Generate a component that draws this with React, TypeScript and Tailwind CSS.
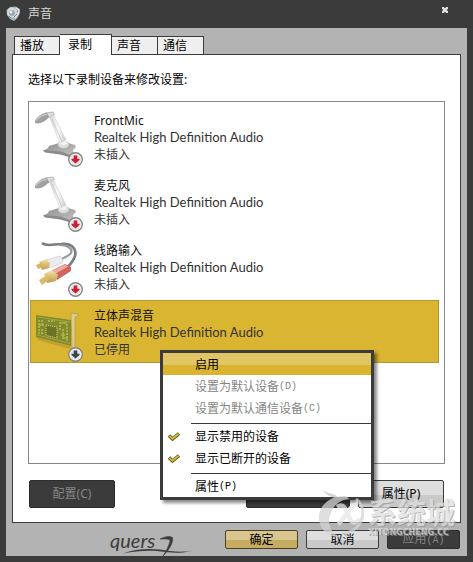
import { useState } from 'react';
import { clsx } from 'clsx';

type DeviceKind = 'mic' | 'line' | 'card';

const tabs = ['播放', '录制', '声音', '通信'];

const devices: { name: string; kind: DeviceKind; status: string }[] = [
  { name: 'FrontMic', kind: 'mic', status: '未插入' },
  { name: '麦克风', kind: 'mic', status: '未插入' },
  { name: '线路输入', kind: 'line', status: '未插入' },
  { name: '立体声混音', kind: 'card', status: '已停用' },
];

function SpeakerIcon() {
  return (
    <svg width="16" height="16" viewBox="0 0 16 16" className="shrink-0" aria-hidden="true">
      <path d="M4 1 L10 0.5 L13.5 3 L14 7 L11.5 12 L8 15 L4 13 L1 9 L0.5 4 Z" fill="#aab4ba" />
      <circle cx="6" cy="6.5" r="5" fill="#d3dade" />
      <circle cx="6" cy="7" r="3" fill="#9aa6ad" />
      <circle cx="5" cy="6" r="1.5" fill="#e6ebee" />
      <path d="M10 2 L13 4 L12 8 L9 12" fill="none" stroke="#e4e8ea" strokeWidth="1.5" />
      <path d="M8 11 L11 8 M11 5 L12 6 M3 10 L5 12" stroke="#77838b" strokeWidth="1" />
    </svg>
  );
}

function StatusBadge({ color }: { color: string }) {
  return (
    <g>
      <circle cx="40.5" cy="53.5" r="6.8" fill="#f5f5f5" stroke="#858585" strokeWidth="1.4" />
      <circle cx="40.5" cy="53.5" r="5.2" fill="#e3e6e8" />
      <path d="M38.7 49.5 h3.6 v3.2 h2.2 v1.2 L40.5 57.6 L36.5 53.9 v-1.2 h2.2 Z" fill={color} />
    </g>
  );
}

function DeviceIcon({ kind }: { kind: DeviceKind }) {
  return (
    <svg width="50" height="61" viewBox="0 0 50 61" className="shrink-0" aria-hidden="true">
      <defs>
        <linearGradient id="metal" x1="0" y1="0" x2="1" y2="0">
          <stop offset="0" stopColor="#d4d4d4" />
          <stop offset="0.5" stopColor="#fafafa" />
          <stop offset="1" stopColor="#c8c8c8" />
        </linearGradient>
        <linearGradient id="base" x1="0" y1="0" x2="1" y2="1">
          <stop offset="0" stopColor="#8e8e8e" />
          <stop offset="1" stopColor="#c4c4c4" />
        </linearGradient>
        <linearGradient id="gold" x1="0" y1="0" x2="0" y2="1">
          <stop offset="0" stopColor="#f6e3a4" />
          <stop offset="1" stopColor="#bd9a4e" />
        </linearGradient>
      </defs>
      {kind === 'mic' && (
        <g>
          <path d="M14 40 L24 37 L33 37 L40 39 L41 41 L38 44 L39 50 L34 50 L26 47 L12 46 L8 45 L13 42 Z" fill="url(#base)" />
          <path d="M8 44 L26 45.5 L38 50 L34 51 L25 48.5 L10 46.5 Z" fill="#8b8b8b" />
          <ellipse cx="28.5" cy="38.5" rx="5.5" ry="3.8" fill="#dedede" stroke="#bbb" strokeWidth="0.6" />
          <ellipse cx="28" cy="36.5" rx="4" ry="2.4" fill="#f2f2f2" />
          <path d="M15 12 L19 10 L31 34 L25 37 Z" fill="url(#metal)" stroke="#d0d0d0" strokeWidth="0.6" />
          <path d="M17 13 L27 36" stroke="#c4c4c4" strokeWidth="0.8" />
          <path d="M10 7 L18 6 L19.5 8.5 L13 12 Z" fill="#dcdcdc" stroke="#a5a5a5" strokeWidth="0.7" />
          <path d="M0 15 C2 10 8 6.5 12 7 L14 11 C10 16 4 18.5 0 17 Z" fill="#a0a0a0" />
          <path d="M1 14.5 C4 10.5 8 8.5 12 8.5" stroke="#c6c6c6" strokeWidth="1.4" fill="none" />
        </g>
      )}
      {kind === 'line' && (
        <g>
          <path d="M7 7 C12 11 19 8 26 8 C37 7 42 13 40 20 C38 26 35 29 31 33" fill="none" stroke="#7b7d80" strokeWidth="2.6" />
          <path d="M24 9 C33 9 38 13 36 17 C34 20 30 21 25 24" fill="none" stroke="#96989b" strokeWidth="2.2" />
          <path d="M11 24 L25 20 L28 24 L27 27 L14 32 Z" fill="#ececee" stroke="#c4c4c4" strokeWidth="0.6" />
          <path d="M4 26 L11 23 L15 27 L14 32 L7 34 Z" fill="url(#gold)" />
          <path d="M1 29 L7 27 L8 31 L3 33 Z" fill="#d5b362" />
          <path d="M16 35 L30 28 L36 31 L36 35 L22 44 Z" fill="#d0655f" />
          <path d="M17 35 L30 28.5 L33 30.5 L20 38 Z" fill="#f1aaa4" />
          <path d="M9 38 L17 34 L23 39 L21 45 L12 47 Z" fill="url(#gold)" />
          <path d="M4 44 L11 40 L14 44 L7 49 Z" fill="#dab968" />
        </g>
      )}
      {kind === 'card' && (
        <g>
          <path d="M2 36 L35 45 L35 48 L3 39 Z" fill="#c19f30" />
          <path d="M1 14 L36 19 L36 45 L1 36 Z" fill="#7f8c2c" />
          <path d="M2 16 L35 21 M2 34 L35 42.5" stroke="#b5a848" strokeWidth="0.8" />
          <path d="M11 24 L22 26 L22 37 L11 34.5 Z" fill="#6c7325" stroke="#e3d47c" strokeWidth="1" strokeDasharray="1 1" />
          <path d="M4 19 v14 M7 19 v4 M7 28 v6 M25 24 v6 M28 28 v10 M32 23 v17 M13 20 h7" stroke="#dccd6c" strokeWidth="1" strokeDasharray="2 1" />
          <path d="M26 34 h4 M4 24 h5 M24 22 h8 M27 37 h6" stroke="#b9b04e" strokeWidth="1.4" />
          <path d="M36 12 L43 13 L43 15 L40 16 L40 46 L37 48 Z" fill="#dccb96" stroke="#b0923a" strokeWidth="0.6" />
        </g>
      )}
      <StatusBadge color={kind === 'card' ? '#3b444c' : '#c8202f'} />
    </svg>
  );
}

function CheckMark() {
  return (
    <svg width="12" height="10" viewBox="0 0 12 10" aria-hidden="true">
      <path d="M1 3.5 L4.5 7 L11 1.5" fill="none" stroke="#5c5212" strokeWidth="3.4" />
      <path d="M1.4 3.8 L4.5 6.8 L10.6 1.8" fill="none" stroke="#d3bf3e" strokeWidth="1.8" />
    </svg>
  );
}

function HotKey({ letter }: { letter: string }) {
  return <span className="font-['Liberation_Mono',monospace] text-[10px]">({letter})</span>;
}

function MenuItem({
  label,
  hotKey,
  checked,
  disabled,
  active,
  onClick,
}: {
  label: string;
  hotKey?: string;
  checked?: boolean;
  disabled?: boolean;
  active?: boolean;
  onClick?: () => void;
}) {
  return (
    <button
      type="button"
      role={checked === undefined ? 'menuitem' : 'menuitemcheckbox'}
      aria-checked={checked}
      disabled={disabled}
      onClick={onClick}
      className={clsx(
        'flex h-[22px] w-full items-center pt-0.5 text-left whitespace-nowrap',
        disabled ? 'text-[#858585]' : 'text-black',
        active && 'bg-linear-to-b from-[#e2c563] from-55% to-[#dab32f] to-55%'
      )}
    >
      <span className="flex w-8 shrink-0 pl-[5px]">{checked && <CheckMark />}</span>
      {label}
      {hotKey && <HotKey letter={hotKey} />}
    </button>
  );
}

function Separator() {
  return <div role="separator" className="mt-1 mb-px ml-7 h-px bg-[#3b3b3b]" />;
}

function ContextMenu() {
  const [showDisabled, setShowDisabled] = useState(true);
  const [showDisconnected, setShowDisconnected] = useState(true);

  return (
    <div
      role="menu"
      className="absolute top-[350px] left-40 z-10 w-[214px] border-3 border-[#3b3b3b] bg-white shadow-[3px_3px_3px_rgba(0,0,0,0.45)]"
    >
      <MenuItem label="启用" active />
      <MenuItem label="设置为默认设备" hotKey="D" disabled />
      <MenuItem label="设置为默认通信设备" hotKey="C" disabled />
      <Separator />
      <MenuItem label="显示禁用的设备" checked={showDisabled} onClick={() => setShowDisabled(!showDisabled)} />
      <MenuItem label="显示已断开的设备" checked={showDisconnected} onClick={() => setShowDisconnected(!showDisconnected)} />
      <Separator />
      <MenuItem label="属性" hotKey="P" />
    </div>
  );
}

function Signature() {
  return (
    <div className="relative mr-auto ml-[98px] h-[19px] w-21 text-[#3d3d3d]">
      <span className="block font-['Lato',sans-serif] text-xl leading-5 italic">quers</span>
      <svg width="84" height="27" viewBox="0 0 84 27" className="absolute top-0 left-0" aria-hidden="true">
        <path d="M50 9 C55 6.5 60 5.5 62.5 7.5 C63.5 12 60 19 53 26 C57 20 60 13 60 10 C58 8.5 54 9 50 9" fill="currentColor" stroke="currentColor" strokeWidth="0.6" />
        <path d="M13 23.5 C28 17.5 46 18.5 60 21 C68 22 76 22 83 20.5 C74 23 66 23.2 58 22.3 C44 20 30 20 13 23.5" fill="currentColor" />
      </svg>
    </div>
  );
}

function Watermark() {
  return (
    <div className="pointer-events-none absolute right-[18px] bottom-[21px] z-20 flex items-start opacity-75" aria-hidden="true">
      <svg width="50" height="54" viewBox="0 0 50 54">
        <path d="M5 3 C11 8 17 5 20 11 C14 11 9 9 5 3 Z" fill="#c9c9c9" />
        <path d="M28 9 C12 8 0 19 1 32 C2 44 12 51 22 50 C13 46 9 37 12 28 C15 18 22 13 31 12 Z" fill="#d4d4d4" />
        <path d="M19 20 C27 15 28 24 32 32 C34 37 38 36 42 32 M40 17 C31 18 27 32 20 37" fill="none" stroke="#e6e6e6" strokeWidth="4.5" />
        <path d="M38 12 C50 22 46 42 26 47" fill="none" stroke="#d4d4d4" strokeWidth="3" />
      </svg>
      <div className="pt-3 text-[#dedede] [text-shadow:1px_1px_0_#999]">
        <div className="text-[29px] leading-7 font-bold">系统城</div>
        <div className="mt-0.5 font-['DejaVu_Sans',sans-serif] text-[8px] leading-2 font-bold">XITONGCHENG.CC</div>
      </div>
    </div>
  );
}

const darkButton = 'rounded-xs border border-[#2c2c2c] bg-[#3b3b3b] text-[#858585]';
const lightButton =
  'rounded-xs border border-[#3b3b3b] bg-linear-to-b from-[#dedede] from-55% to-[#c9c9c9] to-55% text-black';

export default function App() {
  const [tab, setTab] = useState('录制');
  const [selected, setSelected] = useState('立体声混音');

  return (
    <div className="relative overflow-hidden bg-[#3b3b3b] px-1.5 pb-1.5 font-['Noto_Sans','Noto_Sans_CJK_SC',sans-serif] text-xs">
      <header className="flex h-7 items-center gap-1.5 pr-4">
        <SpeakerIcon />
        <h1 className="text-[#d8d8d8]">声音</h1>
        <button type="button" aria-label="关闭" className="mb-2 ml-auto flex size-3 items-center justify-center">
          <svg width="6" height="6" viewBox="0 0 6 6" aria-hidden="true">
            <path d="M0 0 L6 6 M6 0 L0 6" stroke="#e2e2e2" strokeWidth="2.4" />
          </svg>
        </button>
      </header>

      <main className="bg-[#b3b3b3] px-1.5 pt-1.5 pb-[7px]">
        <div role="tablist" className="flex items-end pl-0.5">
          {tabs.map((t) => (
            <button
              key={t}
              type="button"
              role="tab"
              aria-selected={t === tab}
              onClick={() => setTab(t)}
              className={clsx(
                'border-t border-r border-[#3b3b3b] text-left leading-4 text-black first:border-l',
                t === tab ? 'relative -mb-px h-[21px] w-[52px] bg-white pl-2' : 'h-[18px] w-[46px] bg-[#efefef] pl-[5px]'
              )}
            >
              {t}
            </button>
          ))}
        </div>

        <section role="tabpanel" className="border border-[#3b3b3b] bg-white px-[15px] pt-[17px] pb-[14px]">
          <p id="hint" className="leading-4 text-black">
            选择以下录制设备来修改设置:
          </p>
          <ul role="listbox" aria-labelledby="hint" className="mt-[13px] flex min-h-[363px] flex-col gap-0.5 border border-[#868a90] py-[3px] pr-[5px] pl-px">
            {devices.map((device) => (
              <li
                key={device.name}
                role="option"
                aria-selected={device.name === selected}
                onClick={() => setSelected(device.name)}
                className={clsx(
                  'flex h-[63px] items-start gap-[9px] border pl-1',
                  device.name === selected ? 'border-[#b39a2c] bg-[#dab531]' : 'border-transparent'
                )}
              >
                <DeviceIcon kind={device.kind} />
                <div className="pt-1.5 leading-[17px] text-[#333]">
                  <div className="text-[#111]">{device.name}</div>
                  <div className="font-['Lato',sans-serif] text-[13px] leading-[17px]">Realtek High Definition Audio</div>
                  <div>{device.status}</div>
                </div>
              </li>
            ))}
          </ul>

          <div className="mt-4 flex gap-2 px-px">
            <button type="button" disabled className={clsx(darkButton, 'mr-auto h-7 w-[86px]')}>
              配置(C)
            </button>
            <button type="button" disabled aria-label="设为默认值" className={clsx(darkButton, 'h-7 w-[104px]')} />
            <button type="button" className={clsx(lightButton, 'h-7 w-[86px]')}>
              属性(P)
            </button>
          </div>
        </section>

        <footer className="flex justify-end gap-2 pt-[7px] pr-px">
          <Signature />
          <button
            type="button"
            className="h-[19px] w-[73px] rounded-xs border border-[#4a4020] bg-linear-to-b from-[#d9c68e] from-55% to-[#c6ac62] to-55% text-black"
          >
            确定
          </button>
          <button type="button" className={clsx(lightButton, 'h-[19px] w-[73px]')}>
            取消
          </button>
          <button type="button" disabled className={clsx(darkButton, 'h-[19px] w-[73px]')}>
            应用
            <HotKey letter="A" />
          </button>
        </footer>
      </main>

      <ContextMenu />
      <Watermark />
    </div>
  );
}
